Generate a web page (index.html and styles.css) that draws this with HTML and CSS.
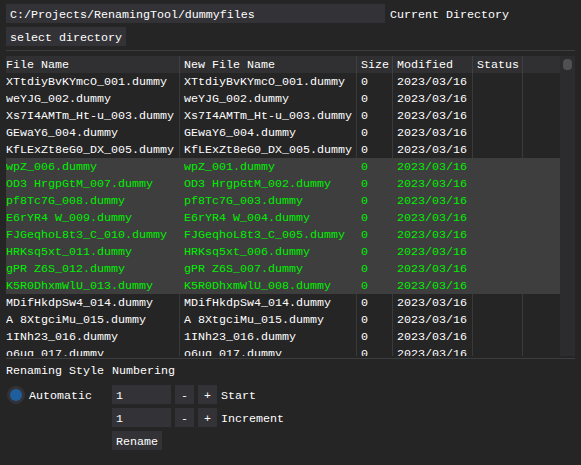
FILE: index.html
```html
<!DOCTYPE html>
<html>
<head>
<meta charset="utf-8">
<link rel="stylesheet" href="styles.css">
</head>
<body>
<div class="app">
  <div class="toprow">
    <div class="frame path">C:/Projects/RenamingTool/dummyfiles</div>
    <span class="flabel lbl">Current Directory</span>
  </div>
  <div class="btnrow"><div class="frame">select directory</div></div>
  <div class="sep sep1"></div>
  <div class="tablewrap">
    <div class="tablearea">
      <div class="tr hdr"><div class="c">File Name</div><div class="c">New File Name</div><div class="c">Size</div><div class="c">Modified</div><div class="c">Status</div><div class="c"></div></div>
      <div class="tr"><div class="c">XTtdiyBvKYmcO_001.dummy</div><div class="c">XTtdiyBvKYmcO_001.dummy</div><div class="c">0</div><div class="c">2023/03/16</div><div class="c"></div><div class="c"></div></div>
      <div class="tr"><div class="c">weYJG_002.dummy</div><div class="c">weYJG_002.dummy</div><div class="c">0</div><div class="c">2023/03/16</div><div class="c"></div><div class="c"></div></div>
      <div class="tr"><div class="c">Xs7I4AMTm_Ht-u_003.dummy</div><div class="c">Xs7I4AMTm_Ht-u_003.dummy</div><div class="c">0</div><div class="c">2023/03/16</div><div class="c"></div><div class="c"></div></div>
      <div class="tr"><div class="c">GEwaY6_004.dummy</div><div class="c">GEwaY6_004.dummy</div><div class="c">0</div><div class="c">2023/03/16</div><div class="c"></div><div class="c"></div></div>
      <div class="tr"><div class="c">KfLExZt8eG0_DX_005.dummy</div><div class="c">KfLExZt8eG0_DX_005.dummy</div><div class="c">0</div><div class="c">2023/03/16</div><div class="c"></div><div class="c"></div></div>
      <div class="tr sel"><div class="c">wpZ_006.dummy</div><div class="c">wpZ_001.dummy</div><div class="c">0</div><div class="c">2023/03/16</div><div class="c"></div><div class="c"></div></div>
      <div class="tr sel"><div class="c">OD3 HrgpGtM_007.dummy</div><div class="c">OD3 HrgpGtM_002.dummy</div><div class="c">0</div><div class="c">2023/03/16</div><div class="c"></div><div class="c"></div></div>
      <div class="tr sel"><div class="c">pf8Tc7G_008.dummy</div><div class="c">pf8Tc7G_003.dummy</div><div class="c">0</div><div class="c">2023/03/16</div><div class="c"></div><div class="c"></div></div>
      <div class="tr sel"><div class="c">E6rYR4 W_009.dummy</div><div class="c">E6rYR4 W_004.dummy</div><div class="c">0</div><div class="c">2023/03/16</div><div class="c"></div><div class="c"></div></div>
      <div class="tr sel"><div class="c">FJGeqhoL8t3_C_010.dummy</div><div class="c">FJGeqhoL8t3_C_005.dummy</div><div class="c">0</div><div class="c">2023/03/16</div><div class="c"></div><div class="c"></div></div>
      <div class="tr sel"><div class="c">HRKsq5xt_011.dummy</div><div class="c">HRKsq5xt_006.dummy</div><div class="c">0</div><div class="c">2023/03/16</div><div class="c"></div><div class="c"></div></div>
      <div class="tr sel"><div class="c">gPR Z6S_012.dummy</div><div class="c">gPR Z6S_007.dummy</div><div class="c">0</div><div class="c">2023/03/16</div><div class="c"></div><div class="c"></div></div>
      <div class="tr sel"><div class="c">K5R0DhxmWlU_013.dummy</div><div class="c">K5R0DhxmWlU_008.dummy</div><div class="c">0</div><div class="c">2023/03/16</div><div class="c"></div><div class="c"></div></div>
      <div class="tr"><div class="c">MDifHkdpSw4_014.dummy</div><div class="c">MDifHkdpSw4_014.dummy</div><div class="c">0</div><div class="c">2023/03/16</div><div class="c"></div><div class="c"></div></div>
      <div class="tr"><div class="c">A 8XtgciMu_015.dummy</div><div class="c">A 8XtgciMu_015.dummy</div><div class="c">0</div><div class="c">2023/03/16</div><div class="c"></div><div class="c"></div></div>
      <div class="tr"><div class="c">1INh23_016.dummy</div><div class="c">1INh23_016.dummy</div><div class="c">0</div><div class="c">2023/03/16</div><div class="c"></div><div class="c"></div></div>
      <div class="tr"><div class="c">o6ug_017.dummy</div><div class="c">o6ug_017.dummy</div><div class="c">0</div><div class="c">2023/03/16</div><div class="c"></div><div class="c"></div></div>
    </div>
    <div class="scrollbar"><div class="thumb"></div></div>
  </div>
  <div class="sep sep2"></div>
  <div class="opts">
    <div class="col1">
      <div class="txt">Renaming Style</div>
      <div class="radiorow">
        <div class="radio"><div class="dot"></div></div>
        <span class="flabel rlbl">Automatic</span>
      </div>
    </div>
    <div class="col2">
      <div class="txt">Numbering</div>
      <div class="numrow first">
        <div class="frame num">1</div>
        <div class="frame sq">-</div>
        <div class="frame sq">+</div>
        <span class="flabel nlbl">Start</span>
      </div>
      <div class="numrow">
        <div class="frame num">1</div>
        <div class="frame sq">-</div>
        <div class="frame sq">+</div>
        <span class="flabel nlbl">Increment</span>
      </div>
      <div class="numrow"><div class="frame">Rename</div></div>
    </div>
  </div>
</div>
</body>
</html>
```
FILE: styles.css
```css
html, body {
  margin: 0;
  padding: 0;
}
body {
  background: #252526;
  color: #ffffff;
  font-family: "Liberation Mono", "DejaVu Sans Mono", monospace;
  font-size: 11.67px;
  line-height: 17px;
  width: 581px;
  height: 465px;
  overflow: hidden;
}
.app {
  padding: 4px 6px 0 6px;
}
.toprow {
  display: flex;
  height: 19px;
}
.frame,
.flabel {
  height: 19px;
  line-height: 16px;
  padding-top: 3px;
  box-sizing: border-box;
  white-space: pre;
}
.frame {
  background: #333337;
  padding-left: 4px;
  padding-right: 4px;
}
.path {
  width: 379px;
}
.lbl {
  margin-left: 5px;
}
.btnrow {
  display: flex;
  margin-top: 4px;
}
.sep {
  height: 1px;
  background: #3d3d40;
}
.sep1 {
  margin-top: 4px;
  margin-bottom: 5px;
}
.tablewrap {
  display: flex;
  height: 300px;
}
.tablearea {
  width: 554px;
  overflow: hidden;
}
.tr {
  display: grid;
  grid-template-columns: 174px 177px 36px 80px 50px 37px;
  height: 17px;
}
.c {
  box-sizing: border-box;
  border-right: 1px solid #3a3a3c;
  padding-left: 4px;
  padding-top: 2px;
  line-height: 15px;
  white-space: pre;
  overflow: hidden;
}
.c:first-child {
  padding-left: 0;
}
.c:last-child {
  border-right: none;
}
.hdr {
  background: #303032;
}
.hdr .c {
  border-right-color: #404043;
}
.sel {
  background: #3e3e3e;
  color: #00f000;
}
.sel .c {
  border-right-color: transparent;
}
.scrollbar {
  width: 15px;
  background: #2c2c2e;
  position: relative;
}
.thumb {
  position: absolute;
  left: 3px;
  top: 3px;
  width: 9px;
  height: 11px;
  border-radius: 4px;
  background: #505052;
}
.sep2 {
  margin-top: 2px;
}
.opts {
  display: flex;
  margin-top: 3px;
}
.col1 {
  width: 106px;
}
.txt {
  height: 17px;
  padding-top: 2px;
  line-height: 15px;
  box-sizing: border-box;
  white-space: pre;
}
.radiorow {
  display: flex;
  align-items: center;
  height: 19px;
  margin-top: 6px;
}
.radio {
  width: 18px;
  height: 18px;
  margin-left: 1px;
  border-radius: 50%;
  background: #333337;
  display: flex;
  align-items: center;
  justify-content: center;
}
.dot {
  width: 12px;
  height: 12px;
  border-radius: 50%;
  background: #1f5e9c;
}
.rlbl {
  margin-left: 4px;
}
.numrow {
  display: flex;
  height: 19px;
  margin-top: 4px;
}
.numrow.first {
  margin-top: 6px;
}
.num {
  width: 59px;
}
.sq {
  width: 19px;
  padding-left: 0;
  padding-right: 0;
  text-align: center;
  margin-left: 4px;
}
.nlbl {
  margin-left: 4px;
}
```
